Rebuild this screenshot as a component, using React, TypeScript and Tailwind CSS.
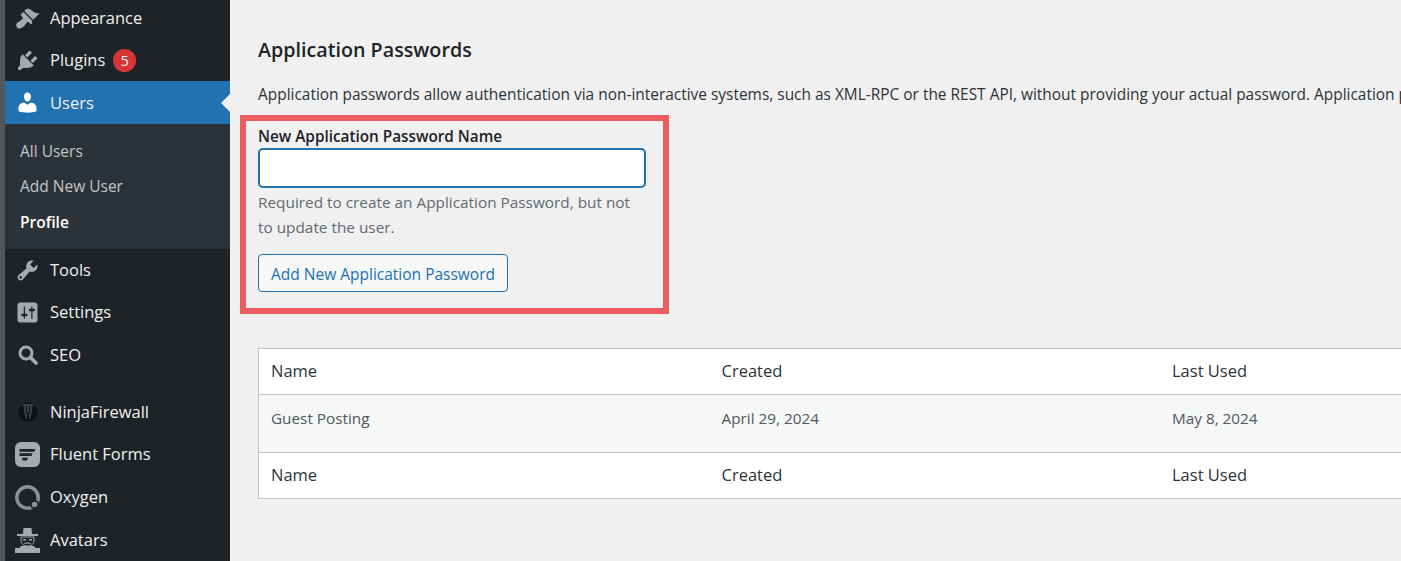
const FONT = "font-['Open_Sans','Noto_Sans',sans-serif]";

function Dash({ d, className = 'w-[25px] h-[25px]' }: { d: string; className?: string }) {
  return (
    <svg viewBox="0 0 20 20" className={className} fill="currentColor">
      <path fillRule="evenodd" d={d} />
    </svg>
  );
}

const ICONS = {
  appearance:
    'M14.48 11.06L7.41 3.99l1.5-1.5c.5-.56 2.3-.47 3.51.32 1.21.8 1.43 1.28 2.91 2.1 1.18.64 2.45 1.26 4.45.85zm-.71.71L6.7 4.7 4.93 6.47c-.39.39-.39 1.02 0 1.41l1.06 1.06c.39.39.39 1.03 0 1.42-.6.6-1.43 1.11-2.21 1.69-.35.26-.7.53-1.01.84C1.43 13.23.9 14.62.97 15.7c.07 1.08 1.27 2.28 2.36 2.36 1.08.07 2.47-.46 3.8-1.79.31-.31.58-.66.84-1.01.58-.78 1.09-1.61 1.69-2.21.39-.39 1.03-.39 1.42 0l1.06 1.06c.39.39 1.02.39 1.41 0z',
  plugins:
    'M13.11 4.36L9.87 7.6 8 5.73l3.24-3.24c.35-.34 1.05-.2 1.56.32.52.51.66 1.21.31 1.55zm-8 1.77l.91-1.12 9.01 9.01-1.19.84c-.71.71-2.63 1.16-3.82 1.16H6.14L4.9 17.26c-.59.59-1.54.59-2.12 0-.59-.58-.59-1.53 0-2.12l1.24-1.24v-3.88c0-1.13.4-3.19 1.09-3.89zm7.26 3.97l3.24-3.24c.34-.35 1.04-.21 1.55.31.52.51.66 1.21.31 1.55l-3.24 3.25z',
  users:
    'M10 9.25c-2.27 0-2.73-3.44-2.73-3.44C7 4.02 7.82 2 9.97 2c2.16 0 2.98 2.02 2.71 3.81 0 0-.41 3.44-2.68 3.44zm0 2.57L12.72 10c2.39 0 4.52 2.33 4.52 4.53v2.49s-3.65 1.13-7.24 1.13c-3.65 0-7.24-1.13-7.24-1.13v-2.49c0-2.25 1.94-4.48 4.47-4.48z',
  tools:
    'M16.68 9.77c-1.34 1.34-3.3 1.67-4.95.99l-5.41 6.52c-.99.99-2.59.99-3.58 0s-.99-2.59 0-3.57l6.52-5.42c-.68-1.65-.35-3.61.99-4.95 1.28-1.28 3.12-1.62 4.72-1.06l-2.89 2.89 2.82 2.82 2.86-2.87c.53 1.58.18 3.39-1.08 4.65zM3.81 16.21c.4.39 1.04.39 1.43 0 .4-.4.4-1.04 0-1.43-.39-.4-1.03-.4-1.43 0-.39.39-.39 1.03 0 1.43z',
  settings:
    'M18 16V4c0-1.1-.9-2-2-2H4c-1.1 0-2 .9-2 2v12c0 1.1.9 2 2 2h12c1.1 0 2-.9 2-2zM8 11h1c.55 0 1 .45 1 1s-.45 1-1 1H8v1.5c0 .28-.22.5-.5.5s-.5-.22-.5-.5V13H6c-.55 0-1-.45-1-1s.45-1 1-1h1V5.5c0-.28.22-.5.5-.5s.5.22.5.5V11zm5-2h-1c-.55 0-1-.45-1-1s.45-1 1-1h1V5.5c0-.28.22-.5.5-.5s.5.22.5.5V7h1c.55 0 1 .45 1 1s-.45 1-1 1h-1v5.5c0 .28-.22.5-.5.5s-.5-.22-.5-.5V9z',
};

function SeoIcon() {
  return (
    <svg viewBox="0 0 20 20" className="w-[20px] h-[20px]" fill="none" stroke="currentColor">
      <circle cx="8" cy="8" r="6" strokeWidth="3" />
      <path d="M12.500 12.500L18 18" strokeWidth="3.600" strokeLinecap="round" />
    </svg>
  );
}

function NinjaIcon() {
  return (
    <svg viewBox="0 0 20 20" className="w-[20px] h-[20px]">
      <circle cx="10" cy="10" r="9.500" fill="#0f1112" />
      <path d="M4 2h12l-2 3v5l-2 7h-1l-.5-7h-1L9 17H8L6 10V5z" fill="#3d3f40" />
      <path d="M8 4h1v8H8zM11 4h1v8h-1z" fill="#0f1112" />
    </svg>
  );
}

function FluentIcon() {
  return (
    <svg viewBox="0 0 25 25" className="w-[25px] h-[25px]">
      <rect width="25" height="25" rx="6" fill="#a7aaad" />
      <path d="M4.500 7h16l-1 2.700h-15zM4.500 11.300h13l-1 2.700h-12zM7 15.800h6l-1 2.700H7.500z" fill="#1d2327" />
    </svg>
  );
}

function OxygenIcon() {
  return (
    <svg viewBox="0 0 25 25" className="w-[25px] h-[25px]">
      <circle cx="12.500" cy="12.500" r="10.700" fill="none" stroke="#8c8f94" strokeWidth="3.500" />
      <circle cx="19.500" cy="19.500" r="4.500" fill="#1d2327" />
      <circle cx="19.500" cy="19.500" r="2.800" fill="#8c8f94" />
    </svg>
  );
}

function AvatarIcon() {
  return (
    <svg viewBox="0 0 25 25" className="w-[25px] h-[25px]" fill="#a7aaad">
      <path d="M8.500 0h8l.5 6h6v2H2V6h6z" />
      <path d="M0 25v-5h4.500l1.500-2h13l1.500 2H25v5z" />
      <path d="M6 9h13v3c0 4-2.500 6-6.500 6S6 16 6 12z" fill="#1d2327" stroke="#a7aaad" strokeWidth="1" />
      <path d="M8 11h3v1.500H8zM14 11h3v1.500h-3zM8.500 16c1-2 7-2 8 0-2-.8-6-.8-8 0z" />
    </svg>
  );
}

function MenuItem({ icon, label, active, badge, rowClass = 'h-[42.500px]' }: {
  icon: React.ReactNode;
  label: string;
  active?: boolean;
  badge?: string;
  rowClass?: string;
}) {
  return (
    <div className={`relative flex items-center shrink-0 ${rowClass} ${active ? 'bg-[#2271b1]' : ''}`}>
      <span className={`w-[45px] flex justify-center shrink-0 ${active ? 'text-white' : 'text-[#a7aaad]'}`}>{icon}</span>
      <span className={`text-[16.500px] text-[#f0f0f1] ${active ? 'pt-[1px]' : ''}`}>{label}</span>
      {badge && (
        <span className="ml-[8px] w-[23px] h-[23px] rounded-full bg-[#d63638] text-white text-[14px] flex items-center justify-center">
          {badge}
        </span>
      )}
      {active && (
        <span className="absolute right-0 top-1/2 -translate-y-1/2 border-y-[9px] border-y-transparent border-r-[9px] border-r-[#f0f0f1]" />
      )}
    </div>
  );
}

function Sidebar() {
  return (
    <aside className="w-[225px] shrink-0 h-full bg-[#1d2327] overflow-hidden flex flex-col">
      <div className="-mt-[3px]">
        <MenuItem icon={<Dash d={ICONS.appearance} />} label="Appearance" rowClass="h-[42px]" />
      </div>
      <MenuItem icon={<Dash d={ICONS.plugins} />} label="Plugins" badge="5" rowClass="h-[42px]" />
      <MenuItem icon={<Dash d={ICONS.users} />} label="Users" active rowClass="h-[43px]" />
      <div className="bg-[#2c3338] h-[125px] shrink-0 pl-[15px] flex flex-col justify-center gap-[15px] text-[15.500px] leading-[20.500px] text-[#c3c4c7]">
        <span>All Users</span>
        <span>Add New User</span>
        <span className="font-semibold text-white">Profile</span>
      </div>
      <MenuItem icon={<Dash d={ICONS.tools} />} label="Tools" />
      <MenuItem icon={<Dash d={ICONS.settings} />} label="Settings" />
      <MenuItem icon={<SeoIcon />} label="SEO" />
      <div className="h-[14.500px] shrink-0" />
      <MenuItem icon={<NinjaIcon />} label="NinjaFirewall" />
      <MenuItem icon={<FluentIcon />} label="Fluent Forms" />
      <MenuItem icon={<OxygenIcon />} label="Oxygen" />
      <MenuItem icon={<AvatarIcon />} label="Avatars" rowClass="h-[44px]" />
    </aside>
  );
}

function PasswordRow({ className, cells }: { className: string; cells: string[] }) {
  return (
    <div className={`flex ${className}`}>
      {cells.map((c, i) => (
        <span key={c} className={`whitespace-nowrap pl-[12px] ${i === 2 ? 'flex-1' : 'w-[450.500px]'}`}>
          {c}
        </span>
      ))}
    </div>
  );
}

export default function App() {
  return (
    <div className={`${FONT} flex w-[1401px] h-[561px] overflow-hidden bg-[#f0f0f1]`}>
      <div className="w-[5px] shrink-0 bg-[#55565b]" />
      <Sidebar />
      <main className="flex-1 min-w-0 pl-[28px] overflow-hidden">
        <h2 className="mt-[35px] text-[19.700px] leading-[30px] font-semibold text-[#1d2327]">Application Passwords</h2>
        <p className="mt-[14px] text-[15.450px] leading-[30px] whitespace-nowrap text-[#2c3338]">
          Application passwords allow authentication via non-interactive systems, such as XML-RPC or the REST API, without providing your actual password. Application passwords can be easily revoked.
        </p>
        <section className="-ml-[18px] mt-[6px] w-[429px] h-[199px] border-[6px] border-[#ec5b5e] pl-[12px] pt-[5px]">
          <label className="block text-[15.300px] leading-[21px] font-semibold text-[#1d2327]">New Application Password Name</label>
          <input type="text" className="block w-[388px] h-[40px] mt-[1px] bg-white rounded-[5px] border-2 border-[#2271b1] outline-none" />
          <p className="mt-[2px] w-[388px] text-[15.350px] leading-[25px] text-[#646970]">
            Required to create an Application Password, but not to update the user.
          </p>
          <button type="button" className="mt-[14px] block w-[250px] h-[38px] pt-[3px] rounded-[4px] border border-[#2271b1] bg-[#f6f7f7] text-[15.500px] text-[#2271b1]">
            Add New Application Password
          </button>
        </section>
        <div className="mt-[34px] h-[151px] w-[1200px] border border-[#c3c4c7] bg-white flex flex-col">
          <PasswordRow className="h-[46px] shrink-0 items-center text-[16.500px] text-[#2c3338] border-b border-[#c3c4c7]" cells={['Name', 'Created', 'Last Used']} />
          <PasswordRow className="h-[58px] shrink-0 pt-[13px] text-[15.300px] leading-[20px] text-[#50575e] bg-[#f6f7f7] border-b border-[#c3c4c7]" cells={['Guest Posting', 'April 29, 2024', 'May 8, 2024']} />
          <PasswordRow className="flex-1 items-center text-[16.500px] text-[#2c3338]" cells={['Name', 'Created', 'Last Used']} />
        </div>
      </main>
    </div>
  );
}
